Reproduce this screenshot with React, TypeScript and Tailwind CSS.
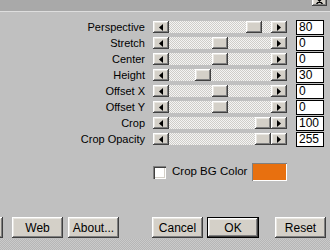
import React from 'react';

const bevel =
  'bg-[#d4d0c8] shadow-[inset_-1px_-1px_#404040,inset_1px_1px_#ffffff,inset_-2px_-2px_#808080,inset_2px_2px_#e8e6e1]';

const sliders = [
  { label: 'Perspective', value: 80, min: -100, max: 100 },
  { label: 'Stretch', value: 0, min: -100, max: 100 },
  { label: 'Center', value: 0, min: -100, max: 100 },
  { label: 'Height', value: 30, min: 0, max: 100 },
  { label: 'Offset X', value: 0, min: -100, max: 100 },
  { label: 'Offset Y', value: 0, min: -100, max: 100 },
  { label: 'Crop', value: 100, min: 0, max: 100 },
  { label: 'Crop Opacity', value: 255, min: 0, max: 255 },
];

const Arrow = ({ dir }: { dir: 'left' | 'right' }) => (
  <div className={`${bevel} w-[16px] h-[12px] flex items-center justify-center shrink-0`}>
    <svg width="4" height="7" viewBox="0 0 4 7">
      {dir === 'left' ? <path d="M4 0 L0 3.5 L4 7 Z" fill="#000" /> : <path d="M0 0 L4 3.5 L0 7 Z" fill="#000" />}
    </svg>
  </div>
);

const SliderRow = ({ label, value, min, max }: { label: string; value: number; min: number; max: number }) => {
  const frac = (value - min) / (max - min);
  return (
    <div className="flex items-center h-[16px]">
      <div className="w-[146px] text-right pr-[1px] leading-none">{label}</div>
      <div className="ml-[7px] flex items-center w-[134px]">
        <Arrow dir="left" />
        <div className="flex-1 h-[12px] bg-[image:repeating-conic-gradient(#f4f4f4_0%_25%,#cfcdc8_0%_50%)] bg-[length:2px_2px] flex items-center">
          <div className={`${bevel} w-[16px] h-[12px] shrink-0`} style={{ marginLeft: Math.round(frac * 86) }} />
        </div>
        <Arrow dir="right" />
      </div>
      <div className="ml-[9px] w-[28px] h-[15px] bg-white border border-black flex items-center pl-[2px] text-[12px] leading-none">
        {value}
      </div>
    </div>
  );
};

const Btn = ({ children, def, className = '' }: { children?: React.ReactNode; def?: boolean; className?: string }) => (
  <div
    className={`${def ? 'border border-black' : ''} h-[21px] flex items-center justify-center shrink-0 ${className}`}
  >
    <div className={`${bevel} w-full h-full flex items-center justify-center text-[12px]`}>{children}</div>
  </div>
);

export default function App() {
  return (
    <div
      className="w-[330px] h-[250px] overflow-hidden bg-[#c0c0c0] text-black text-[11px] flex flex-col"
      style={{ fontFamily: '"Liberation Sans", Arial, sans-serif' }}
    >
      {/* title strip, close button cut off at the top */}
      <div className="h-[12px] bg-[#a9a9a9] flex justify-end items-end shrink-0 border-b border-[#dedede]">
        <div className={`${bevel} w-[15px] h-[13px] mr-[3px] mb-[5px] flex items-end justify-center pb-[2px]`}>
          <svg width="7" height="6" viewBox="0 0 7 6">
            <path d="M0.5 0 L6.5 6 M6.5 0 L0.5 6" stroke="#000" strokeWidth="1.5" />
          </svg>
        </div>
      </div>

      <div className="pt-[7px] flex flex-col">
        {sliders.map((s) => (
          <SliderRow key={s.label} {...s} />
        ))}
      </div>

      <div className="flex items-center mt-[16px] h-[18px]">
        <div className="ml-[153px] w-[13px] h-[13px] bg-white shadow-[inset_1px_1px_#808080,inset_2px_2px_#404040,inset_-1px_-1px_#ffffff,inset_-2px_-2px_#d4d0c8]" />
        <div className="ml-[6px] w-[80px] text-[11.5px]">Crop BG Color</div>
        <div className="w-[35px] h-[18px] bg-[#e8700f] shadow-[inset_1px_1px_#808080,inset_-1px_-1px_#ffffff]" />
      </div>

      <div className="flex mt-[36px]">
        <Btn className="w-[51px] ml-[-48px]" />
        <Btn className="w-[51px] ml-[9px]">Web</Btn>
        <Btn className="w-[51px] ml-[5px]">About...</Btn>
        <Btn className="w-[51px] ml-[33px]">Cancel</Btn>
        <Btn def className="w-[52px] ml-[4px]">OK</Btn>
        <Btn className="w-[51px] ml-[16px]">Reset</Btn>
      </div>

      <div className="mt-[1px] flex-1 bg-[image:repeating-conic-gradient(#cacaca_0%_25%,#b6b6b6_0%_50%)] bg-[length:2px_2px]" />
    </div>
  );
}
